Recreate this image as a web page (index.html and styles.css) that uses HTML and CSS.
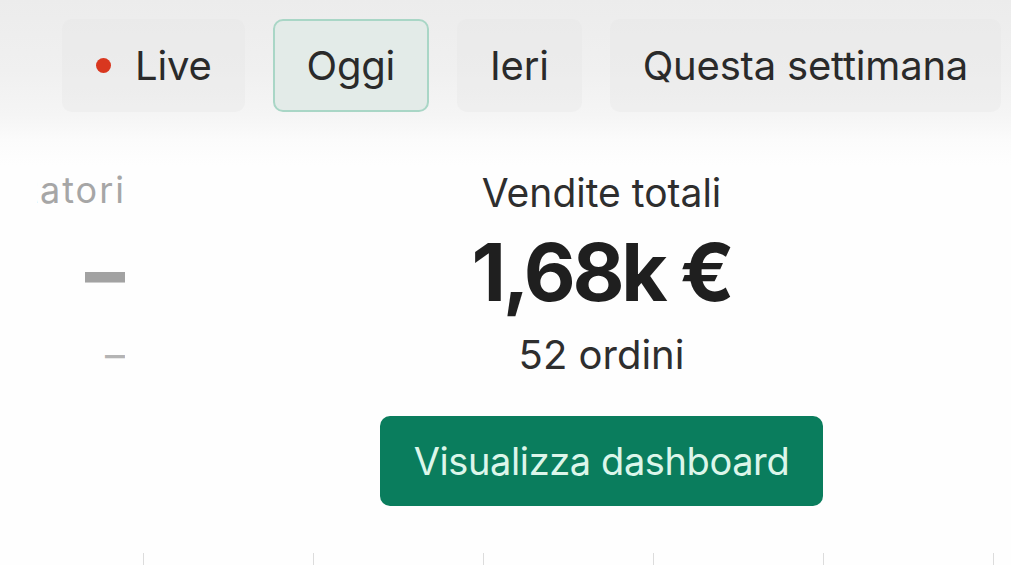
FILE: index.html
```html
<!DOCTYPE html>
<html lang="it">
<head>
<meta charset="utf-8">
<title>Vendite</title>
<link rel="stylesheet" href="styles.css">
</head>
<body>
<div class="page">
  <div class="topbar">
    <div class="chip"><span class="dot"></span>Live</div>
    <div class="chip active">Oggi</div>
    <div class="chip">Ieri</div>
    <div class="chip">Questa settimana</div>
  </div>
  <div class="cards">
    <div class="card side">
      <div class="row title"><span>Visitatori</span></div>
      <div class="row big"><span>–</span></div>
      <div class="row sub"><span>–</span></div>
    </div>
    <div class="card main">
      <div class="row title">Vendite totali</div>
      <div class="row big">1,68k €</div>
      <div class="row sub">52 ordini</div>
      <button class="cta">Visualizza dashboard</button>
    </div>
  </div>
  <div class="ticks">
    <span class="tick"></span><span class="tick"></span><span class="tick"></span><span class="tick"></span><span class="tick"></span><span class="tick"></span>
  </div>
</div>
</body>
</html>
```
FILE: styles.css
```css
* { box-sizing: border-box; }
html, body { margin: 0; padding: 0; }
body {
  width: 1011px;
  height: 565px;
  overflow: hidden;
  background: #fefefe;
  font-family: Inter, "Noto Sans", "Liberation Sans", sans-serif;
  color: #2b2b2b;
}
.page {
  width: 1011px;
  height: 565px;
  display: flex;
  flex-direction: column;
  background: linear-gradient(to bottom, #ececec 0, #f0f0f0 70px, #f5f5f5 115px, #fbfbfb 140px, #fefefe 165px);
}
.topbar {
  height: 130px;
  flex: none;
  display: flex;
  align-items: flex-start;
  gap: 28px;
  padding: 19px 0 0 62px;
}
.chip {
  height: 93px;
  padding: 0 33px;
  display: flex;
  align-items: center;
  border-radius: 10px;
  background: rgba(228, 228, 228, 0.35);
  font-size: 40px;
  line-height: 1;
  color: #2a2a2a;
  white-space: nowrap;
  letter-spacing: -0.2px;
}
.chip.active {
  background: #e3ebe8;
  border: 2px solid #a9d6c6;
  padding: 0 32px;
}
.dot {
  width: 15px;
  height: 15px;
  border-radius: 50%;
  background: #d9371f;
  margin-right: 24px;
  margin-left: 1px;
}
.cards {
  display: flex;
  align-items: flex-start;
  height: 400px;
  flex: none;
}
.card {
  display: flex;
  flex-direction: column;
  padding-top: 39px;
}
.row { white-space: nowrap; }
.card.side {
  width: 88px;
  margin-left: 37px;
  overflow: hidden;
  align-items: flex-end;
}
.card.side .row {
  display: flex;
  justify-content: flex-end;
  width: 100%;
}
.card.main {
  width: 443px;
  margin-left: 255px;
  align-items: center;
}
.title {
  height: 48px;
  font-size: 39px;
  line-height: 48px;
  color: #2e2e2e;
}
.card.side .title {
  font-size: 36px;
  line-height: 42px;
  color: #a6a6a6;
  letter-spacing: 2px;
  margin-right: -1px;
}
.big {
  margin-top: 10px;
  height: 90px;
  font-size: 80px;
  line-height: 90px;
  font-weight: 700;
  letter-spacing: -3.3px;
  color: #1f1f1f;
}
.card.side .big {
  color: #a2a2a2;
  letter-spacing: 0;
  font-weight: 800;
}
.sub {
  margin-top: 14px;
  height: 48px;
  font-size: 40px;
  line-height: 48px;
  color: #2e2e2e;
}
.card.side .sub {
  color: #b4b4b4;
  font-size: 40px;
}
.cta {
  margin-top: 37px;
  width: 443px;
  height: 90px;
  border: none;
  border-radius: 10px;
  background: #0a7d5d;
  color: #dcf6ea;
  font-family: Inter, "Noto Sans", "Liberation Sans", sans-serif;
  font-size: 38px;
  letter-spacing: -0.4px;
  padding: 0;
  cursor: pointer;
}
.ticks {
  display: flex;
  gap: 169px;
  padding-left: 143px;
  margin-top: 23px;
}
.tick {
  width: 1px;
  height: 12px;
  background: #dcdcdc;
}
```
